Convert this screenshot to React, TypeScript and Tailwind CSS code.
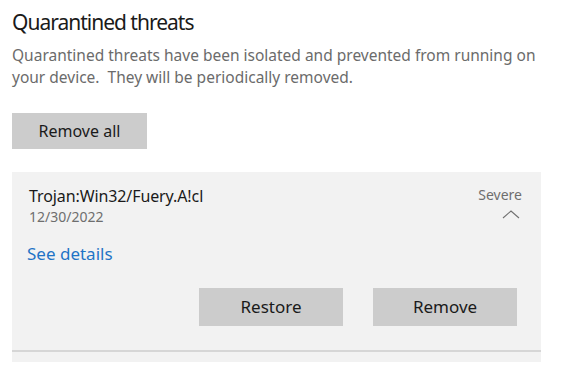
import React from "react";

function ChevronUp() {
  return (
    <svg width="18" height="9" viewBox="0 0 18 9" fill="none" className="block">
      <path d="M1 8 L9 1 L17 8" stroke="#707070" strokeWidth="1.1" />
    </svg>
  );
}

export default function App() {
  return (
    <div
      className="w-[565px] h-[373px] bg-white overflow-hidden pl-[12px] text-[#1a1a1a]"
      style={{ fontFamily: '"Segoe UI", "Noto Sans", sans-serif' }}
    >
      <h1 className="pt-[8px] text-[21px] leading-[28px] tracking-[-1px]">Quarantined threats</h1>
      <p className="mt-[8px] text-[15.5px] leading-[22px] text-[#6b6b6b]">
        Quarantined threats have been isolated and prevented from running on
        <br />
        your device.&nbsp; They will be periodically removed.
      </p>
      <button className="mt-[25px] w-[135px] h-[36px] bg-[#cccccc] text-[16px]">Remove all</button>

      <div className="mt-[23px] w-[529px] bg-[#f2f2f2]">
        <div className="flex justify-between pl-[17px] pr-[19px] pt-[14px]">
          <div>
            <div className="text-[16px] leading-[20px] tracking-[-0.1px]">Trojan:Win32/Fuery.A!cl</div>
            <div className="mt-[2px] text-[14px] leading-[18px] text-[#6e6e6e]">12/30/2022</div>
          </div>
          <div className="flex flex-col items-end">
            <div className="text-[14px] leading-[18px] text-[#6e6e6e]">Severe</div>
            <div className="mt-[6px] mr-[2px]">
              <ChevronUp />
            </div>
          </div>
        </div>
        <div className="pl-[15px] mt-[17px] text-[17px] leading-[22px]">
          <a className="text-[#1f74c6]">See details</a>
        </div>
        <div className="flex justify-end gap-[30px] pr-[24px] mt-[23px] pb-[24px]">
          <button className="w-[144px] h-[38px] bg-[#cccccc] text-[17px]">Restore</button>
          <button className="w-[144px] h-[38px] bg-[#cccccc] text-[17px]">Remove</button>
        </div>
        <div className="h-[2px] bg-[#d6d6d6]" />
        <div className="h-[10px]" />
      </div>
    </div>
  );
}
